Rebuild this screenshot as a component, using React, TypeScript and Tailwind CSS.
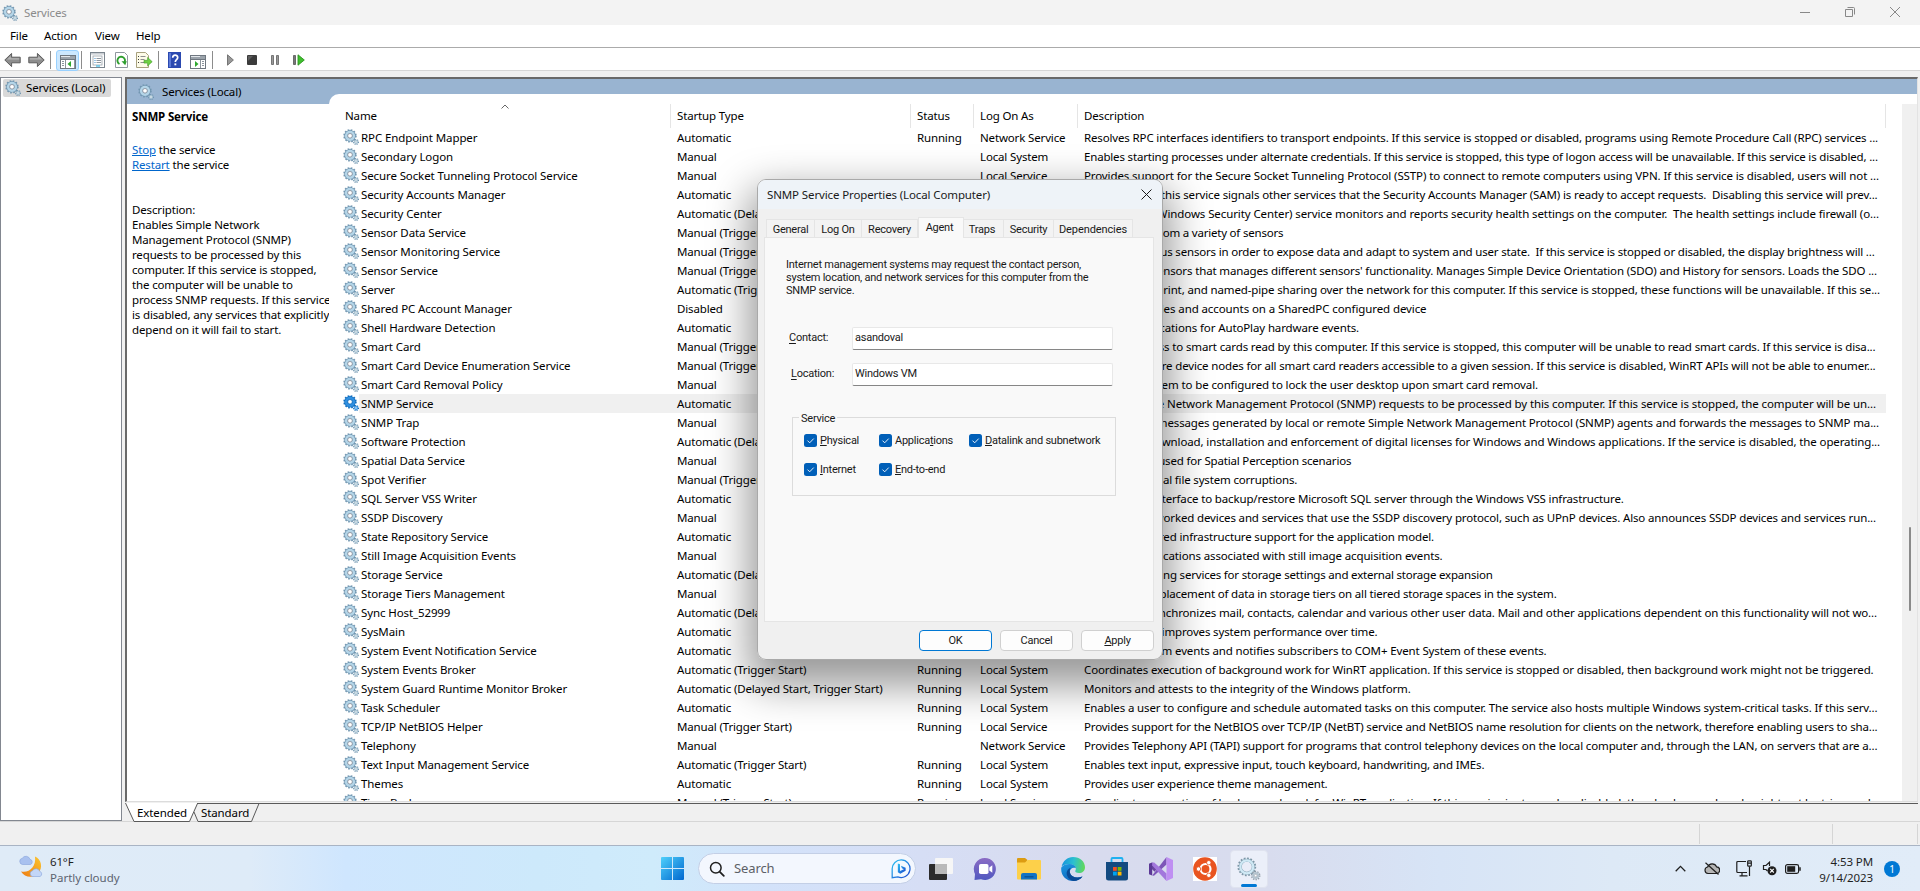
import React from "react";

type Row = [name: string, startup: string, status: string, logOn: string, description: string, tracking: string];

const A = "Automatic";
const M = "Manual";
const MT = "Manual (Trigger Start)";
const AT = "Automatic (Trigger Start)";
const AD = "Automatic (Delayed Start)";
const LS = "Local System";
const LV = "Local Service";
const R = "Running";

const rows: Row[] = [
  ["RPC Endpoint Mapper", A, R, "Network Service", "Resolves RPC interfaces identifiers to transport endpoints. If this service is stopped or disabled, programs using Remote Procedure Call (RPC) services ...", "tracking-[-0.148px]"],
  ["Secondary Logon", M, "", LS, "Enables starting processes under alternate credentials. If this service is stopped, this type of logon access will be unavailable. If this service is disabled, ...", "tracking-[-0.176px]"],
  ["Secure Socket Tunneling Protocol Service", M, "", LV, "Provides support for the Secure Socket Tunneling Protocol (SSTP) to connect to remote computers using VPN. If this service is disabled, users will not ...", "tracking-[-0.115px]"],
  ["Security Accounts Manager", A, "", "", "The startup of this service signals other services that the Security Accounts Manager (SAM) is ready to accept requests.\u00a0 Disabling this service will prev...", "tracking-[-0.132px]"],
  ["Security Center", AD, "", "", "The WSCSVC (Windows Security Center) service monitors and reports security health settings on the computer.\u00a0 The health settings include firewall (o...", "tracking-[-0.101px]"],
  ["Sensor Data Service", MT, "", "", "Delivers data from a variety of sensors", "tracking-[-0.207px]"],
  ["Sensor Monitoring Service", MT, "", "", "Monitors various sensors in order to expose data and adapt to system and user state.\u00a0 If this service is stopped or disabled, the display brightness will ...", "tracking-[-0.18px]"],
  ["Sensor Service", MT, "", "", "A service for sensors that manages different sensors' functionality. Manages Simple Device Orientation (SDO) and History for sensors. Loads the SDO ...", "tracking-[-0.144px]"],
  ["Server", AT, "", "", "Supports file, print, and named-pipe sharing over the network for this computer. If this service is stopped, these functions will be unavailable. If this se...", "tracking-[-0.139px]"],
  ["Shared PC Account Manager", "Disabled", "", "", "Manages profiles and accounts on a SharedPC configured device", "tracking-[-0.097px]"],
  ["Shell Hardware Detection", A, "", "", "Provides notifications for AutoPlay hardware events.", "tracking-[-0.122px]"],
  ["Smart Card", MT, "", "", "Manages access to smart cards read by this computer. If this service is stopped, this computer will be unable to read smart cards. If this service is disa...", "tracking-[-0.147px]"],
  ["Smart Card Device Enumeration Service", MT, "", "", "Creates software device nodes for all smart card readers accessible to a given session. If this service is disabled, WinRT APIs will not be able to enumer...", "tracking-[-0.158px]"],
  ["Smart Card Removal Policy", M, "", "", "Allows the system to be configured to lock the user desktop upon smart card removal.", "tracking-[-0.117px]"],
  ["SNMP Service", A, "", "", "Enables Simple Network Management Protocol (SNMP) requests to be processed by this computer. If this service is stopped, the computer will be un...", "tracking-[-0.102px]"],
  ["SNMP Trap", M, "", "", "Receives trap messages generated by local or remote Simple Network Management Protocol (SNMP) agents and forwards the messages to SNMP ma...", "tracking-[-0.132px]"],
  ["Software Protection", AD, "", "", "Enables the download, installation and enforcement of digital licenses for Windows and Windows applications. If the service is disabled, the operating...", "tracking-[-0.13px]"],
  ["Spatial Data Service", M, "", "", "This service is used for Spatial Perception scenarios", "tracking-[-0.176px]"],
  ["Spot Verifier", MT, "", "", "Verifies potential file system corruptions.", "tracking-[-0.171px]"],
  ["SQL Server VSS Writer", A, "", "", "Provides the interface to backup/restore Microsoft SQL server through the Windows VSS infrastructure.", "tracking-[-0.15px]"],
  ["SSDP Discovery", M, "", "", "Discovers networked devices and services that use the SSDP discovery protocol, such as UPnP devices. Also announces SSDP devices and services run...", "tracking-[-0.14px]"],
  ["State Repository Service", A, "", "", "Provides required infrastructure support for the application model.", "tracking-[-0.158px]"],
  ["Still Image Acquisition Events", M, "", "", "Launches applications associated with still image acquisition events.", "tracking-[-0.127px]"],
  ["Storage Service", AD, "", "", "Provides enabling services for storage settings and external storage expansion", "tracking-[-0.204px]"],
  ["Storage Tiers Management", M, "", "", "Optimizes the placement of data in storage tiers on all tiered storage spaces in the system.", "tracking-[-0.179px]"],
  ["Sync Host_52999", AD, "", "", "This service synchronizes mail, contacts, calendar and various other user data. Mail and other applications dependent on this functionality will not wo...", "tracking-[-0.138px]"],
  ["SysMain", A, "", "", "Maintains and improves system performance over time.", "tracking-[-0.152px]"],
  ["System Event Notification Service", A, "", "", "Monitors system events and notifies subscribers to COM+ Event System of these events.", "tracking-[-0.13px]"],
  ["System Events Broker", AT, R, LS, "Coordinates execution of background work for WinRT application. If this service is stopped or disabled, then background work might not be triggered.", "tracking-[-0.13px]"],
  ["System Guard Runtime Monitor Broker", "Automatic (Delayed Start, Trigger Start)", R, LS, "Monitors and attests to the integrity of the Windows platform.", "tracking-[-0.136px]"],
  ["Task Scheduler", A, R, LS, "Enables a user to configure and schedule automated tasks on this computer. The service also hosts multiple Windows system-critical tasks. If this serv...", "tracking-[-0.136px]"],
  ["TCP/IP NetBIOS Helper", MT, R, LV, "Provides support for the NetBIOS over TCP/IP (NetBT) service and NetBIOS name resolution for clients on the network, therefore enabling users to sha...", "tracking-[-0.174px]"],
  ["Telephony", M, "", "Network Service", "Provides Telephony API (TAPI) support for programs that control telephony devices on the local computer and, through the LAN, on servers that are a...", "tracking-[-0.13px]"],
  ["Text Input Management Service", AT, R, LS, "Enables text input, expressive input, touch keyboard, handwriting, and IMEs.", "tracking-[-0.158px]"],
  ["Themes", A, R, LS, "Provides user experience theme management.", "tracking-[-0.202px]"],
  ["Time Broker", MT, R, LV, "Coordinates execution of background work for WinRT application. If this service is stopped or disabled, then background work might not be triggered.", "tracking-[-0.13px]"],
];

const SELECTED = "SNMP Service";

function Gears({ className = "", blue = false }: { className?: string; blue?: boolean }) {
  const edge = blue ? "#0f6cbd" : "#7196b0";
  const body = blue ? "#2f8fe0" : "#b4d5e8";
  return (
    <svg viewBox="0 0 16 16" className={"h-4 w-4 shrink-0 " + className}>
      <circle cx="7" cy="6.8" r="5.9" fill="none" stroke={edge} strokeWidth="1.6" strokeDasharray="1.65 1.44" />
      <circle cx="7" cy="6.8" r="3.9" fill="none" stroke={edge} strokeWidth="3.6" />
      <circle cx="7" cy="6.8" r="3.8" fill="none" stroke={body} strokeWidth="2.6" />
      <circle cx="7" cy="6.8" r="2.3" fill="#fff" stroke={blue ? "#0f6cbd" : "#8a8f9a"} strokeWidth=".8" />
      <circle cx="13" cy="13" r="2.4" fill="none" stroke={edge} strokeWidth="1.3" strokeDasharray="1 .88" />
      <circle cx="13" cy="13" r="1.4" fill="#fff" stroke={blue ? "#2f8fe0" : "#9fbccd"} strokeWidth="1.2" />
    </svg>
  );
}

function LargeGears() {
  return (
    <svg viewBox="0 0 24 24" className="h-6 w-6">
      <circle cx="9.8" cy="9.8" r="8.4" fill="none" stroke="#7d97a6" strokeWidth="2" strokeDasharray="1.8 1.5" />
      <circle cx="9.800" cy="9.800" r="6.500" fill="#e9edf8" stroke="#86a5b6" strokeWidth="3" />
      <circle cx="9.800" cy="9.800" r="6.500" fill="none" stroke="#cfe9f5" strokeWidth="2.200" />
      <circle cx="18.700" cy="18.600" r="4" fill="none" stroke="#8c98a2" strokeWidth="1.500" strokeDasharray="1.300 1.200" />
      <circle cx="18.700" cy="18.600" r="2.600" fill="#f4f7fb" stroke="#b4c4cf" strokeWidth="1.800" />
      <circle cx="18.700" cy="18.600" r="1.300" fill="#fff" stroke="#8c98a2" strokeWidth=".6" />
    </svg>
  );
}

function Arrow({ flip = false }: { flip?: boolean }) {
  return (
    <svg viewBox="0 0 17 16" className={flip ? "h-4 w-[17px] -scale-x-100" : "h-4 w-[17px]"}>
      <path d="M.8 8 7.600 1.400v3.800h8.600v5.600H7.600v3.800z" fill="#8d8d8d" stroke="#5c5c5c" strokeWidth="1" />
      <path d="M2.500 8 6.800 4v2.200h8.400v1.400H3z" fill="#b5b5b5" />
    </svg>
  );
}

function Divider({ className }: { className: string }) {
  return <div className={"h-[18px] w-px bg-[#8c8c8c] " + className} />;
}

function PaneIcon({ mirror = false }: { mirror?: boolean }) {
  return (
    <svg viewBox="0 0 16 14" className="h-3.5 w-4" shapeRendering="crispEdges">
      <rect x=".5" y=".5" width="15" height="13" fill="#fff" stroke="#6f7780" />
      <rect x="1" y="1" width="14" height="3" fill="#9ba3ab" />
      <rect x="1" y="1" width="9" height="1" fill="#e4e8ec" />
      <path d="M0 4.500h16" stroke="#6f7780" />
      {mirror ? (
        <g>
          <path d="M10.500 5v8" stroke="#8d959d" />
          <path d="M12 6.500h2M12 8.500h2M12 10.500h2" stroke="#8d959d" />
          <path d="M5 6v6l3.500-3z" fill="#2fa82f" shapeRendering="auto" />
        </g>
      ) : (
        <g>
          <path d="M5.500 5v8M14 5v8" stroke="#8d959d" />
          <path d="M2 6.500h2M2 8.500h2M2 10.500h2" stroke="#8d959d" />
          <path d="M11 6v6L7.500 9z" fill="#2fa82f" shapeRendering="auto" />
        </g>
      )}
    </svg>
  );
}

function Toolbar() {
  return (
    <div className="flex h-[22px] items-center bg-white pl-[4px] pt-[2px]">
      <Arrow />
      <div className="ml-[7px]"><Arrow flip /></div>
      <Divider className="ml-[5px]" />
      <div className="ml-[5px] flex h-[21px] w-[23px] items-center justify-center rounded-[3px] border border-[#99d1ff] bg-[#cce8ff] pt-[3px]">
        <PaneIcon />
      </div>
      <Divider className="ml-[2px]" />
      <svg viewBox="0 0 15 16" className="ml-2 h-4 w-[15px]">
        <rect x=".5" y=".5" width="14" height="15" fill="#fff" stroke="#7b858e" />
        <rect x="1" y="1" width="13" height="1.600" fill="#c9ced3" />
        <rect x="3" y="4" width="9" height="9" fill="#fff" stroke="#9aa3ab" strokeWidth=".8" />
        <path d="M4.500 6.500h1M4.500 8.500h1M4.500 10.500h1" stroke="#3a8fd0" />
        <path d="M6.500 6.500h4.500M6.500 8.500h4.500M6.500 10.500h4.500" stroke="#8f979f" />
        <path d="M6 14h4" stroke="#55c3ea" strokeWidth="1.400" />
      </svg>
      <svg viewBox="0 0 13 16" className="ml-[10px] h-4 w-[13px]">
        <path d="M.5.5h9l3 3v12H.5z" fill="#fff" stroke="#8f979f" />
        <path d="M4.500 12A3.800 3.800 0 1 1 9.500 10.500" fill="none" stroke="#2e9e2e" strokeWidth="1.900" />
        <path d="M6.500 9.300h5.300l-1.600 3.900z" fill="#2e9e2e" />
      </svg>
      <svg viewBox="0 0 17 16" className="ml-2 h-4 w-[17px]">
        <path d="M.5.5h9l3 3v12H.5z" fill="#fdfbe8" stroke="#a8a17e" />
        <path d="M2 4.500h1M2 7.500h1M2 10.500h1" stroke="#3b3b3b" />
        <path d="M4.500 4.500h5M4.500 7.500h4M4.500 10.500h4" stroke="#8e8e8e" />
        <path d="M8 8.300h3.600V5.400L16.200 9.700l-4.600 4.200v-2.800H8z" fill="#6fd044" stroke="#3f9a28" strokeWidth=".6" />
      </svg>
      <Divider className="ml-[5px]" />
      <svg viewBox="0 0 13 16" className="ml-[9px] h-4 w-[13px]">
        <rect width="13" height="16" fill="#2b49b0" />
        <rect x="1" y="1" width="2" height="14" fill="#5a78d6" />
        <path d="M4.700 5.800c0-3.400 5-3.400 5-.3 0 2.200-2.400 2.100-2.400 4.400" fill="none" stroke="#fff" strokeWidth="1.700" />
        <rect x="6.400" y="11.400" width="1.900" height="1.900" fill="#fff" />
      </svg>
      <div className="ml-[9px] pt-[3px]"><PaneIcon mirror /></div>
      <Divider className="ml-[6px]" />
      <svg viewBox="0 0 7 12" className="ml-[14px] h-3 w-[7px]"><path d="M.5.8v10.400L6.400 6z" fill="#989898" stroke="#6b6b6b" strokeWidth=".9" /></svg>
      <svg viewBox="0 0 10 10" className="ml-[13px] h-2.5 w-2.5"><rect width="10" height="10" rx="1" fill="#3b3b3b" /><path d="M1 1h5L1 6z" fill="#5d5d5d" /></svg>
      <svg viewBox="0 0 8 10" className="ml-[14px] h-2.5 w-2"><path d="M.5.5h2v9h-2zM5.500.5h2v9h-2z" fill="#9a9a9a" stroke="#6b6b6b" strokeWidth=".9" /></svg>
      <svg viewBox="0 0 12 12" className="ml-[14px] h-3 w-3"><path d="M.5 1.500h2v9h-2z" fill="#777" stroke="#555" strokeWidth=".8" /><path d="M5 .8v10.400L11.300 6z" fill="#3fbf2e" stroke="#2c9420" strokeWidth=".9" /></svg>
    </div>
  );
}

function BottomTabs() {
  return (
    <div className="relative h-[18px] leading-[18px] tracking-[-0.1px]">
      <svg viewBox="0 0 1793 19" className="absolute left-0 top-0 h-[19px] w-[1793px]">
        <path d="M0 0h72l-8 18H9z" fill="#fff" />
        <path d="M72 .5h1721" stroke="#5a5a5a" fill="none" />
        <path d="M.5 0 9 18.500h55.500L72.500.5M69 9l4 9.500h53.500L134 .5" fill="none" stroke="#5a5a5a" />
      </svg>
      <div className="relative flex pl-3 pt-[1px]">
        <span className="w-16">Extended</span>
        <span>Standard</span>
      </div>
    </div>
  );
}

function SidePane() {
  return (
    <div className="w-[202px] shrink-0">
      <div className="flex h-[25px] items-center pl-[11px]">
        <Gears />
        <span className="ml-2">Services (Local)</span>
      </div>
      <div className="h-[697px] bg-white pl-[5px] pt-[5px] leading-[15px]">
        <div className="font-bold">SNMP Service</div>
        <div className="mt-[18px]"><span className="text-[#0066cc] underline">Stop</span> the service</div>
        <div><span className="text-[#0066cc] underline">Restart</span> the service</div>
        <div className="mt-[30px] whitespace-nowrap">
          Description:<br />Enables Simple Network<br />Management Protocol (SNMP)<br />requests to be processed by this<br />computer. If this service is stopped,<br />the computer will be unable to<br />process SNMP requests. If this service<br />is disabled, any services that explicitly<br />depend on it will fail to start.
        </div>
      </div>
    </div>
  );
}

function ServiceList() {
  return (
    <div className="mt-[15px] h-[707px] min-w-0 flex-1 rounded-tl-[10px] bg-white pt-[10px]">
      <div className="flex h-[697px]">
        <div className="w-[1557px] shrink-0 overflow-hidden pl-[7px]">
          <div className="relative h-6 border-r border-[#e5e5e5] leading-6">
            <svg viewBox="0 0 8 5" className="absolute left-[165px] top-0 h-[5px] w-2"><path d="M.5 4.500 4 1l3.500 3.500" fill="none" stroke="#666" /></svg>
            <div className="grid grid-cols-[335px_240px_63px_104px_1fr]">
              <span className="border-r border-[#e5e5e5] pl-[9px]">Name</span>
              <span className="border-r border-[#e5e5e5] pl-[6px]">Startup Type</span>
              <span className="border-r border-[#e5e5e5] pl-[6px]">Status</span>
              <span className="border-r border-[#e5e5e5] pl-[6px]">Log On As</span>
              <span className="pl-[6px]">Description</span>
            </div>
          </div>
          {rows.map(([name, startup, status, logOn, description, tracking]) => (
            <div key={name} className="flex h-[19px] whitespace-pre leading-[19px]">
              <Gears className="ml-[7px] mt-px" blue={name === SELECTED} />
              <div className={name === SELECTED ? "flex flex-1 bg-[#f0f0f0]" : "flex flex-1"}>
                <span className="w-[318px] shrink-0 pl-[2px] tracking-[-0.11px]">{name}</span>
                <span className="w-[240px] shrink-0">{startup}</span>
                <span className="w-[63px] shrink-0">{status}</span>
                <span className="w-[104px] shrink-0">{logOn}</span>
                <span className={tracking}>{description}</span>
              </div>
            </div>
          ))}
        </div>
        <div className="ml-4 w-4 bg-[#f0f0f0] pt-[423px]">
          <div className="ml-[7px] h-[84px] w-[2px] rounded bg-[#8a8a8a]" />
        </div>
      </div>
    </div>
  );
}

function Tab({ label, className }: { label: string; className: string }) {
  return <div className={"h-[18px] border-r border-t border-[#e5e5e5] bg-[#f3f3f3] text-center leading-[19px] " + className}>{label}</div>;
}

function Check({ children }: { children: React.ReactNode }) {
  return (
    <div className="flex h-[13px] items-center">
      <svg viewBox="0 0 13 13" className="h-[13px] w-[13px] shrink-0">
        <rect width="13" height="13" rx="2.500" fill="#005fb8" />
        <path d="m3.500 6.600 2.200 2.200 4-4.200" fill="none" stroke="#fff" strokeWidth=".9" />
      </svg>
      <span className="ml-[3px] whitespace-nowrap pt-px">{children}</span>
    </div>
  );
}

function Field({ label, rest, value, className }: { label: string; rest: string; value: string; className: string }) {
  return (
    <div className={"flex h-[23px] items-center " + className}>
      <span className="flex-1"><u className="underline-offset-2">{label}</u>{rest}</span>
      <div className="h-[23px] w-[261px] rounded-[2px] border border-[#e8e8e8] border-b-[#868686] bg-white pl-[2px] leading-[19px]">{value}</div>
    </div>
  );
}

function Dialog() {
  return (
    <div className="absolute left-[757px] top-[179px] flex h-[481px] w-[406px] flex-col overflow-hidden rounded-[9px] border border-[#a9a9a9] bg-[#f0f0f0] text-[#1a1a1a]">
      <div className="flex h-[29px] shrink-0 items-center justify-between bg-[#eef3f8] pl-[9px] pr-[10px] tracking-[-0.12px]">
        <span>SNMP Service Properties (Local Computer)</span>
        <svg viewBox="0 0 11 11" className="h-[11px] w-[11px]"><path d="m.5.5 10 10m0-10-10 10" fill="none" stroke="#1a1a1a" /></svg>
      </div>
      <div className="flex flex-1 flex-col px-[6px] pt-[8px] font-[Roboto] text-[11px] tracking-[-0.24px]">
        <div className="flex h-5 items-end pl-[2px]">
          <Tab label="General" className="w-[49px] border-l" />
          <Tab label="Log On" className="w-[47px]" />
          <Tab label="Recovery" className="w-[56px]" />
          <div className="relative z-10 -mb-px h-[21px] w-[46px] border-x border-t border-[#e5e5e5] bg-[#f9f9f9] pr-[3px] text-center leading-[19px]">Agent</div>
          <Tab label="Traps" className="w-[40px] pr-[3px]" />
          <Tab label="Security" className="w-[50px]" />
          <Tab label="Dependencies" className="w-[79px] tracking-[-0.1px]" />
        </div>
        <div className="h-[385px] w-[390px] border border-[#e5e5e5] bg-[#f9f9f9] pl-[21px] pt-5">
          <p className="whitespace-nowrap leading-[13px]">
            Internet management systems may request the contact person,<br />
            system location, and network services for this computer from the<br />
            SNMP service.
          </p>
          <Field label="C" rest="ontact:" value="asandoval" className="ml-[3px] mt-[30px] w-[324px]" />
          <Field label="L" rest="ocation:" value="Windows VM" className="ml-[5px] mt-[13px] w-[322px]" />
          <div className="relative ml-[6px] mt-[31px] h-[79px] w-[324px] border border-[#dcdcdc] pl-[11px] pt-[16px]">
            <span className="absolute left-[6px] top-[-7px] bg-[#f9f9f9] px-[2px] leading-[15px]">Service</span>
            <div className="grid grid-cols-[75px_90px_1fr] gap-y-4">
              <Check><u>P</u>hysical</Check>
              <Check>Applica<u>t</u>ions</Check>
              <Check><u>D</u>atalink and subnetwork</Check>
              <Check><u>I</u>nternet</Check>
              <Check><u>E</u>nd-to-end</Check>
            </div>
          </div>
        </div>
        <div className="mt-2 flex justify-end gap-2 pr-[2px] text-center leading-[20px]">
          <div className="h-[21px] w-[73px] rounded-[4px] border border-[#0078d4] bg-[#fdfdfd]">OK</div>
          <div className="h-[21px] w-[73px] rounded-[4px] border border-[#d0d0d0] bg-[#fdfdfd]">Cancel</div>
          <div className="h-[21px] w-[73px] rounded-[4px] border border-[#d0d0d0] bg-[#fdfdfd]"><u>A</u>pply</div>
        </div>
      </div>
    </div>
  );
}

function Slot({ children }: { children: React.ReactNode }) {
  return <div className="flex h-11 w-11 items-center justify-center">{children}</div>;
}

function Taskbar() {
  return (
    <div className="grid h-[46px] grid-cols-[650px_1fr_640px] border-t border-[#a9b4c4] bg-[linear-gradient(90deg,#dfebf7_0%,#deebf8_13%,#cfe6fe_18%,#cde9fb_28%,#cfebfb_34%,#d3e2fa_40%,#d6def5_48%,#d8dbee_57%,#d8dcee_66%,#d7e4f6_75%,#dde9f6_84%,#e1ecf8_100%)] text-[#1f1f1f]">
      <div className="flex pl-[19px] pt-[9px]">
        <svg viewBox="0 0 24 24" className="h-6 w-6">
          <defs><linearGradient id="moon" x1="1" y1="0" x2="0" y2="1"><stop stopColor="#fbc62f" /><stop offset="1" stopColor="#ee7b12" /></linearGradient></defs>
          <path d="M16 1.500c6.500 3 8 11 3.500 16.500C15.500 23 6 23.500 2 16.500c8 2 15.500-5 14-15z" fill="url(#moon)" />
          <path d="M3.500 9.500a3.200 3.200 0 0 1-.2-6.300A4.300 4.300 0 0 1 11 4.300a2.700 2.700 0 0 1 .5 5.200z" fill="#a9c1ef" stroke="#86a3dc" strokeWidth=".6" />
          <path d="M13.500 21.500a2.900 2.900 0 0 1 0-5.700 4 4 0 0 1 7.300.6 2.700 2.700 0 0 1 .2 5.100z" fill="#c3d6f7" stroke="#86a3dc" strokeWidth=".6" />
        </svg>
        <div className="-mt-px ml-[7px] leading-4"><div>61°F</div><div className="tracking-[0px] text-[#5c6370]">Partly cloudy</div></div>
      </div>
      <div className="flex items-center">
        <Slot>
          <svg viewBox="0 0 23 23" className="h-[23px] w-[23px]">
            <defs><linearGradient id="win" x1="0" y1="0" x2="1" y2="1"><stop stopColor="#4fd0fb" /><stop offset="1" stopColor="#0067cf" /></linearGradient></defs>
            <path d="M1 0h10v11H0V1q0-1 1-1zM12 0h10q1 0 1 1v10H12zM0 12h11v11H1q-1 0-1-1zM12 12h11v10q0 1-1 1H12z" fill="url(#win)" />
          </svg>
        </Slot>
        <div className="ml-1 mr-[3px] flex h-[31px] w-[218px] items-center rounded-full border border-[#c3cfe6] bg-[#f3f7fe] pl-[10px] pr-1">
          <svg viewBox="0 0 16 16" className="h-4 w-4"><circle cx="6.800" cy="6.800" r="5.300" fill="none" stroke="#1f1f1f" strokeWidth="1.500" /><path d="m10.800 10.800 4 4" stroke="#1f1f1f" strokeWidth="1.800" strokeLinecap="round" /></svg>
          <span className="ml-[9px] flex-1 text-[13px] tracking-[-0.1px] text-[#5c5f66]">Search</span>
          <svg viewBox="0 0 20.500 20.500" className="h-5 w-5">
            <defs><linearGradient id="bing" x1="0" y1="0" x2="1" y2="1"><stop stopColor="#2bc4f2" /><stop offset="1" stopColor="#1c45cf" /></linearGradient></defs>
            <path d="M10.500 1a9 9 0 1 1-3.500 17.300L1.200 19.200V10A9.200 9.200 0 0 1 10.500 1z" fill="#f3f9ff" stroke="url(#bing)" strokeWidth="1.300" />
            <path d="M7 4.500l2.200.9v6.900l4-1.900-2-1-1-2.400 4.800 2v3L9.500 15 7 13.600z" fill="url(#bing)" />
          </svg>
        </div>
        <Slot>
          <svg viewBox="0 0 24 22" className="h-[22px] w-6"><rect x="6" width="18" height="16" rx="1" fill="#f6f6f6" /><rect y="6" width="18" height="16" rx="1" fill="#2b2b2b" /><path d="M6 6h12v10H6z" fill="#b9b9b9" /></svg>
        </Slot>
        <Slot>
          <svg viewBox="0 0 24 24" className="h-6 w-6">
            <defs><linearGradient id="chat" x1="0" y1="0" x2="0" y2="1"><stop stopColor="#8b6cc4" /><stop offset="1" stopColor="#5058c0" /></linearGradient></defs>
            <path d="M12 1a11 11 0 1 1-4 21.300L1.500 23 2 17A11 11 0 0 1 12 1z" fill="url(#chat)" />
            <rect x="6" y="7" width="9.500" height="10" rx="1.800" fill="#fff" /><path d="m16.300 10.500 3-2.300v7.600l-3-2.300z" fill="#fff" />
          </svg>
        </Slot>
        <Slot>
          <svg viewBox="0 0 24 22" className="h-[22px] w-6">
            <path d="M1 0h7l2.500 2H10v3H0V1q0-1 1-1z" fill="#dc9c12" />
            <path d="M0 4.500h8L10.500 2H23q1 0 1 1v17.500q0 1-1 1H1q-1 0-1-1z" fill="#fdd04a" />
            <path d="M4 21.500V17q0-2 2-2h12q2 0 2 2v4.500z" fill="#1273c4" /><path d="M7.500 18h9v1.500h-9z" fill="#0b5596" />
          </svg>
        </Slot>
        <Slot>
          <svg viewBox="0 0 24 24" className="h-6 w-6">
            <defs>
              <linearGradient id="edgeA" x1="0" y1="0.4" x2="1" y2=".5"><stop stopColor="#1593dd" /><stop offset=".5" stopColor="#2cc0d0" /><stop offset="1" stopColor="#62d957" /></linearGradient>
              <linearGradient id="edgeB" x1="0" y1="0" x2=".4" y2="1"><stop stopColor="#1a98e0" /><stop offset="1" stopColor="#1169c0" /></linearGradient>
            </defs>
            <path d="M.6 9.500C2 4 6.500 0 12 0c7 0 12 4.600 12 10.200 0 3.600-2.600 5.800-6 5.800-2.800 0-4.400-1-3.600-2.400C16 11 13.500 7 8.500 7 5 7 2 8 .6 9.500z" fill="url(#edgeA)" />
            <path d="M.3 10.500C2 8 5 7 8.500 7c3.500 0 6 1.800 6.500 4.200C11.500 9.500 8 12.500 9 16c1.200 4 6.500 6 12.500 3.500C19.500 22.300 16 24 12 24 5 24-.7 18 .3 10.500z" fill="url(#edgeB)" />
            <path d="M9.800 10.800C6.500 12 5 15 6 18.300 7 21.500 9.500 23.500 12.500 24c3.700 0 7-1.700 9-4.500C15.500 22 10.200 20 9 16c-.6-2-.2-3.800.8-5.200z" fill="#0b4a94" />
          </svg>
        </Slot>
        <Slot>
          <svg viewBox="0 0 24 24" className="h-6 w-6">
            <path d="M6.500 6V2q0-1 1-1h9q1 0 1 1v4" fill="none" stroke="#1fb1f0" strokeWidth="1.800" />
            <path d="M1 5h22v16q0 2.500-2.500 2.500h-17Q1 23.500 1 21z" fill="#134a80" />
            <path d="M8 10h3.800v3.800H8z" fill="#f25022" /><path d="M12.700 10h3.800v3.800h-3.800z" fill="#7fba00" /><path d="M8 14.700h3.800v3.800H8z" fill="#00a4ef" /><path d="M12.700 14.700h3.800v3.800h-3.800z" fill="#ffb900" />
          </svg>
        </Slot>
        <Slot>
          <svg viewBox="0 0 24 24" className="h-6 w-6">
            <path d="M0 7.200 3.200 5.500l6 5-3.700 4.300L0 9z" fill="#6a45a0" />
            <path d="M0 6.800 3.200 5.500v13L0 17.200z" fill="#5b3896" />
            <path d="M3.200 18.500 17.500 0v7.500L5 18.800z" fill="#7d55b8" />
            <path d="M3.200 5.500h2L17.500 16.500V24L3.200 8.500z" fill="#a277dc" />
            <path d="M17.500 0 24 3v18l-6.500 3z" fill="#bf8ff2" />
          </svg>
        </Slot>
        <Slot>
          <svg viewBox="0 0 24 24" className="h-6 w-6">
            <rect width="24" height="24" fill="#fff" /><circle cx="12" cy="12" r="11.800" fill="#e95420" />
            <circle cx="12.500" cy="12" r="5" fill="none" stroke="#fff" strokeWidth="2.200" />
            <g fill="#fff" stroke="#e95420" strokeWidth=".8"><circle cx="5.500" cy="12" r="2.200" /><circle cx="15.800" cy="5.700" r="2.200" /><circle cx="15.800" cy="18.300" r="2.200" /></g>
          </svg>
        </Slot>
        <Slot>
          <div className="flex h-[38px] w-[38px] flex-col items-center justify-between rounded-[4px] border border-[#dfe3ef] bg-[#ebeff9] pt-[6px]">
            <LargeGears />
            <div className="h-[3px] w-4 rounded bg-[#0078d4]" />
          </div>
        </Slot>
      </div>
      <div className="flex justify-end pr-5">
        <div className="flex items-center">
          <svg viewBox="0 0 11 7" className="h-[7px] w-[11px]"><path d="m.7 6.200 4.800-4.800 4.800 4.800" fill="none" stroke="#1f1f1f" strokeWidth="1.300" /></svg>
          <svg viewBox="0 0 16 13" className="ml-[18px] h-[13px] w-4">
            <path d="M4 11.500a3.300 3.300 0 0 1-.4-6.500 4.800 4.800 0 0 1 9-.1 3.300 3.300 0 0 1-.5 6.600z" fill="#b5b5b5" stroke="#1f1f1f" strokeWidth="1.200" />
            <path d="m1.500.8 13 11.700" stroke="#1f1f1f" strokeWidth="1.200" />
          </svg>
          <svg viewBox="0 0 16 17" className="ml-4 h-[17px] w-4" fill="none" stroke="#1f1f1f" strokeWidth="1.200">
            <path d="M10 1.500H1.800q-1 0-1 1v9q0 1 1 1H11M6 12.500v3M3.500 15.800h8" /><rect x="11.700" y=".8" width="3.600" height="5.400" rx=".8" /><path d="M13.500 6.500v9.500M11.700 3.200h3.600" />
          </svg>
          <svg viewBox="0 0 15 15" className="ml-[10px] h-[15px] w-[15px]">
            <path d="M7.500 5V1.200L4 4.500H1.500v4H4L5.500 10" fill="none" stroke="#1f1f1f" strokeWidth="1.200" />
            <circle cx="10" cy="9.700" r="4.500" fill="#1f1f1f" /><path d="m8.200 7.900 3.600 3.600m0-3.600-3.600 3.600" stroke="#fff" strokeWidth="1.100" />
          </svg>
          <svg viewBox="0 0 16 10" className="ml-2 h-2.5 w-4"><rect x=".6" y=".6" width="13" height="8.800" rx="1.800" fill="none" stroke="#1f1f1f" strokeWidth="1.200" /><rect x="2.200" y="2.200" width="8" height="5.600" fill="#1f1f1f" /><path d="M15 3.200v3.600" stroke="#1f1f1f" strokeWidth="1.500" /></svg>
        </div>
        <div className="w-[72px] pt-2 text-right leading-4 tracking-[-0.1px]"><div>4:53 PM</div><div>9/14/2023</div></div>
        <div className="ml-[11px] mt-[15px] flex h-4 w-4 items-center justify-center rounded-full bg-[#0078d4] text-[10px] text-white">1</div>
      </div>
    </div>
  );
}

export default function App() {
  return (
    <div className="relative h-[891px] w-[1920px] overflow-hidden bg-[#f0f0f0] font-['Noto_Sans','Open_Sans',sans-serif] text-[11.5px] tracking-[-0.15px] text-black">
      <div className="flex h-[25px] justify-between bg-[#f3f3f3] pl-[2px] pr-5 pt-px">
        <div className="flex items-center gap-[6px] text-[#8b8b8b]"><Gears /> Services</div>
        <div className="flex items-center gap-[35px] pb-[2px]">
          <svg viewBox="0 0 10 10" className="h-2.5 w-2.5"><path d="M0 5.500h10" stroke="#888" /></svg>
          <svg viewBox="0 0 10 10" className="h-2.5 w-2.5"><path d="M.5 2.500h7v7h-7zM2.500.5h6q1 0 1 1v6" fill="none" stroke="#888" /></svg>
          <svg viewBox="0 0 10 10" className="h-2.5 w-2.5"><path d="m0 0 10 10M10 0 0 10" stroke="#888" /></svg>
        </div>
      </div>
      <div className="flex h-[23px] items-center border-b border-[#ababab] bg-white pl-[10px]">
        <span className="w-[34px]">File</span><span className="w-[51px]">Action</span><span className="w-[41px]">View</span><span>Help</span>
      </div>
      <Toolbar />
      <div className="flex h-[752px] border-b border-t border-[#d6d6d6] pt-[6px]">
        <div className="h-[744px] w-[122px] border border-[#828790] bg-white pl-[2px] pt-px">
          <div className="flex h-[18px] w-[108px] items-center rounded-[2px] bg-[#d9d9d9] pl-[2px]"><Gears /><span className="ml-[5px] whitespace-nowrap">Services (Local)</span></div>
        </div>
        <div className="ml-[3px] w-[1793px]">
          <div className="flex h-[725px] border-2 border-b border-r border-b-[#dcdcdc] border-l-[#696969] border-r-[#e3e3e3] border-t-[#696969] bg-[#99b4d1]">
            <SidePane />
            <ServiceList />
          </div>
          <div className="mt-px"><BottomTabs /></div>
        </div>
      </div>
      <div className="flex h-[23px] justify-end pr-[2px] pt-[2px]">
        <div className="h-5 w-[133px] border-l border-[#d5d5d5]" />
        <div className="h-5 w-[86px] border-x border-[#d5d5d5]" />
      </div>
      <Taskbar />
      <div className="absolute left-[757px] top-[179px] h-[481px] w-[406px] rounded-[9px] shadow-[0_18px_40px_8px_rgba(0,0,0,0.4)]" />
      <Dialog />
    </div>
  );
}
